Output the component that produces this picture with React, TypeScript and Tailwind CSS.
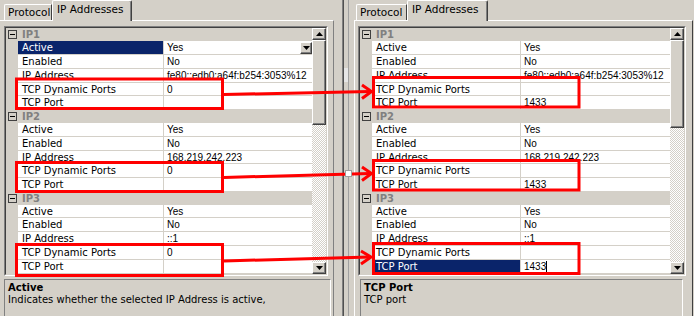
import React from "react";

type Prop = { label: string; value: string; h: string; sel?: boolean; drop?: boolean; caret?: boolean };
type Group = { name: string; props: Prop[] };

const labelFont = "font-['DejaVu_Sans',sans-serif] text-[10px]";
const valueFont = "font-['Liberation_Sans',Arial,sans-serif] text-[10px]";
const raised =
  "bg-[#d4d0c8] border border-t-white border-l-white border-r-[#404040] border-b-[#404040] shadow-[inset_-1px_-1px_0_#808080]";

const addrs = ["fe80::edb0:a64f:b254:3053%12", "168.219.242.223", "::1"];
const rowH = [
  ["h-[14px]", "h-[14px]", "h-[14px]", "h-[13px]", "h-[14px]"],
  ["h-[14px]", "h-[14px]", "h-[13px]", "h-[14px]", "h-[14px]"],
  ["h-[13px]", "h-[14px]", "h-[14px]", "h-[14px]", "h-[14px]"],
];

function makeGroups(right: boolean): Group[] {
  return addrs.map((a, i) => ({
    name: "IP" + (i + 1),
    props: [
      { label: "Active", value: "Yes", h: rowH[i][0], sel: !right && i === 0, drop: !right && i === 0 },
      { label: "Enabled", value: "No", h: rowH[i][1] },
      { label: "IP Address", value: a, h: rowH[i][2] },
      { label: "TCP Dynamic Ports", value: right ? "" : "0", h: rowH[i][3] },
      { label: "TCP Port", value: right ? "1433" : "", h: rowH[i][4], sel: right && i === 2, caret: right && i === 2 },
    ],
  }));
}

function Arrow({ up }: { up?: boolean }) {
  return (
    <svg width="7" height="4" viewBox="0 0 7 4">
      <polygon points={up ? "3.5,0 7,4 0,4" : "0,0 7,0 3.5,4"} fill="#000" />
    </svg>
  );
}

function GroupRow({ name }: { name: string }) {
  return (
    <div className="flex h-[13px]">
      <div className="w-[12px] shrink-0 flex items-center pl-[2px]">
        <div className="w-[9px] h-[9px] border border-[#404040] flex items-center justify-center">
          <div className="w-[5px] h-px bg-black" />
        </div>
      </div>
      <div className={`flex-1 flex items-center pl-[4px] font-bold text-[#808080] ${labelFont}`}>{name}</div>
    </div>
  );
}

function PropRow({ p, labelW }: { p: Prop; labelW: string }) {
  return (
    <div className={`flex ${p.h}`}>
      <div className="w-[12px] shrink-0" />
      <div
        className={`${labelW} shrink-0 border-b border-r border-[#d4d0c8] flex items-center pl-[4px] whitespace-nowrap overflow-hidden ${labelFont} ${
          p.sel ? "bg-[#0a246a] text-white" : "bg-white text-black"
        }`}
      >
        {p.label}
      </div>
      <div className={`flex-1 min-w-0 bg-white border-b border-[#d4d0c8] flex items-center pl-[3px] whitespace-nowrap overflow-hidden text-black ${valueFont}`}>
        <span>{p.value}</span>
        {p.caret && <span className="w-px h-[11px] bg-black" />}
        {p.drop && (
          <div className={`ml-auto w-[12px] h-[12px] shrink-0 flex items-center justify-center ${raised}`}>
            <Arrow />
          </div>
        )}
      </div>
    </div>
  );
}

function Grid({ right }: { right?: boolean }) {
  const groups = makeGroups(!!right);
  const labelW = right ? "w-[149px]" : "w-[146px]";
  return (
    <div className={`${right ? "w-[328px]" : "w-[324px]"} border border-t-[#808080] border-l-[#808080] border-r-white border-b-white`}>
      <div className="flex border border-t-[#404040] border-l-[#404040] border-r-[#d4d0c8] border-b-[#d4d0c8] bg-[#d4d0c8]">
        <div className="flex-1 flex flex-col">
          {groups.map((g) => (
            <React.Fragment key={g.name}>
              <GroupRow name={g.name} />
              {g.props.map((p) => (
                <PropRow key={p.label} p={p} labelW={labelW} />
              ))}
            </React.Fragment>
          ))}
        </div>
        <div className="w-[14px] shrink-0 flex flex-col">
          <div className={`h-[12px] flex items-center justify-center ${raised}`}>
            <Arrow up />
          </div>
          <div className={`${right ? "h-[88px]" : "h-[85px]"} ${raised}`} />
          <div className="flex-1 bg-[image:repeating-conic-gradient(#ffffff_0%_25%,#d4d0c8_0%_50%)] bg-[length:2px_2px]" />
          <div className={`h-[12px] flex items-center justify-center ${raised}`}>
            <Arrow />
          </div>
        </div>
      </div>
    </div>
  );
}

function Tabs({ right }: { right?: boolean }) {
  return (
    <div className={`flex items-end h-[20px] ${right ? "pl-[2px]" : "pl-[4px]"} font-['DejaVu_Sans',sans-serif] text-[10.5px] text-black`}>
      <div
        className={`${right ? "w-[51px]" : "w-[48px]"} h-[16px] pl-[3px] pt-[1px] flex items-center border-t border-l border-r border-t-white border-l-white border-r-[#404040] rounded-tl-[2px]`}
      >
        Protocol
      </div>
      <div
        className={`${right ? "w-[81px]" : "w-[80px]"} h-[21px] -mb-px relative z-10 bg-[#d4d0c8] pl-[4px] pb-[3px] flex items-center border-t border-l border-r border-t-white border-l-white border-r-[#404040] shadow-[inset_-1px_0_0_#808080] rounded-t-[2px]`}
      >
        IP Addresses
      </div>
    </div>
  );
}

function Desc({ title, text, right }: { title: string; text: string; right?: boolean }) {
  return (
    <div
      className={`${right ? "ml-[2px] w-[323px]" : "w-[327px]"} mt-[3px] h-[40px] border border-t-[#808080] border-l-[#808080] border-r-white border-b-white pl-[3px] pt-[2px] font-['DejaVu_Sans',sans-serif] text-[10px] leading-[12px] text-black`}
    >
      <div className="font-bold">{title}</div>
      <div>{text}</div>
    </div>
  );
}

export default function App() {
  return (
    <div className="relative w-[694px] h-[316px] overflow-hidden bg-[#d4d0c8] flex">
      {/* left pane */}
      <div className="w-[335px] shrink-0 flex flex-col">
        <Tabs />
        <div className="flex-1 w-[334px] border-t border-r border-t-white border-r-[#808080] pl-[4px] pt-[5px]">
          <Grid />
          <Desc title="Active" text="Indicates whether the selected IP Address is active," />
        </div>
      </div>

      {/* splitter */}
      <div className="w-[19px] shrink-0 flex">
        <div className="w-[7px]" />
        <div className="w-px bg-[#808080]" />
        <div className="w-px bg-[#505050]" />
        <div className="w-[4px]" />
        <div className="w-px bg-[#a0a0a0]" />
        <div className="w-[5px]" />
      </div>

      {/* right pane */}
      <div className="flex-1 flex flex-col">
        <Tabs right />
        <div className="flex-1 mr-[1px] border-t border-l border-r border-t-white border-l-white border-r-[#404040] pl-[3px] pt-[5px]">
          <Grid right />
          <Desc right title="TCP Port" text="TCP port" />
        </div>
      </div>

      {/* annotations */}
      <svg className="absolute inset-0 pointer-events-none" width="694" height="316" viewBox="0 0 694 316">
        <rect x="344" y="68" width="4" height="14" fill="#e6e6e6" />
        <rect x="80" y="0" width="12" height="1.5" fill="#ff0000" />
        <g fill="none" stroke="#ff0000" strokeWidth="3">
          <rect x="16.5" y="79" width="206" height="29.5" />
          <rect x="16.5" y="162.5" width="206" height="29" />
          <rect x="16.5" y="244.5" width="206" height="31" />
          <rect x="373.5" y="77.5" width="205.5" height="29.5" />
          <rect x="373.5" y="160.5" width="205.5" height="29.5" />
          <rect x="373.5" y="243.5" width="205.5" height="30" />
          <line x1="224" y1="94.5" x2="370" y2="91.5" />
          <polyline points="362,85 371.5,91.5 362,98.5" />
          <line x1="224" y1="177.5" x2="370" y2="173.5" />
          <polyline points="362,167 371.5,173.5 362,180.5" />
          <line x1="224" y1="261" x2="370" y2="257" />
          <polyline points="361,251 371,257 361,264" />
        </g>
        <rect x="345.5" y="170.5" width="6" height="6" fill="#ffffff" stroke="#a0a0a0" strokeWidth="1" />
      </svg>
    </div>
  );
}
